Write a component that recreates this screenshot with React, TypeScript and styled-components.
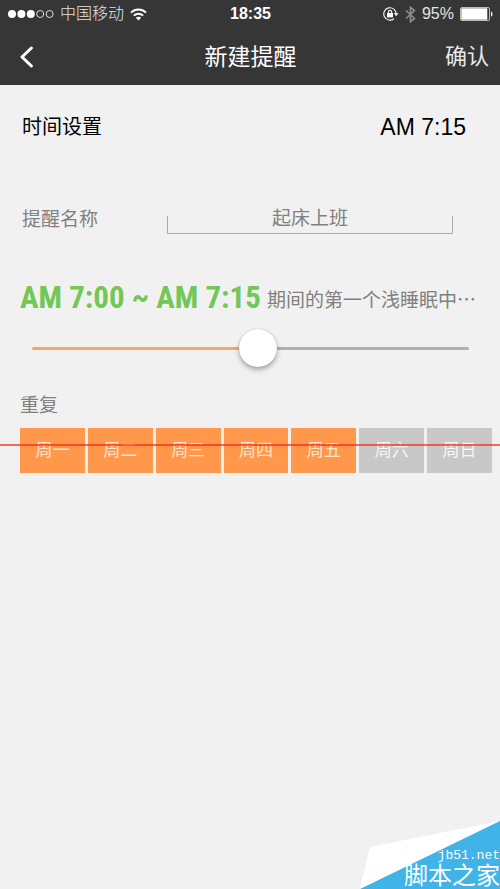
import React, { useState } from "react";
import styled, { createGlobalStyle } from "styled-components";

const GlobalStyle = createGlobalStyle`
  * { box-sizing: border-box; }
  body {
    margin: 0;
    background: #f1f1f1;
    font-family: "Liberation Sans", "Noto Sans CJK SC", sans-serif;
  }
  button, input { font: inherit; color: inherit; }
  button { border: 0; padding: 0; background: none; cursor: pointer; }
`;

const Screen = styled.div`
  position: relative;
  min-height: 100vh;
  overflow: hidden;
  display: flex;
  flex-direction: column;
`;

const TopBar = styled.header`
  background: #363636;
  color: #fff;
`;

const StatusBar = styled.div`
  display: grid;
  grid-template-columns: 1fr auto 1fr;
  align-items: center;
  height: 28px;
  padding: 0 7px 0 8px;
  font-size: 16px;
  line-height: 20px;
`;

const StatusGroup = styled.div<{ $end?: boolean }>`
  display: flex;
  align-items: center;
  justify-content: ${(p) => (p.$end ? "flex-end" : "flex-start")};
  gap: 6px;
  color: #e4e4e4;
`;

const Carrier = styled.span`
  font-weight: 300;
`;

const Clock = styled.span`
  font-weight: 700;
`;

const NavBar = styled.nav`
  display: grid;
  grid-template-columns: 1fr auto 1fr;
  align-items: center;
  height: 57px;
  padding: 0 11px 0 12px;
`;

const BackButton = styled.button`
  justify-self: start;
  display: flex;
  padding: 0 8px;
`;

const Title = styled.h1`
  margin: 0;
  font-size: 23px;
  line-height: 32px;
  font-weight: 400;
`;

const ConfirmButton = styled.button`
  justify-self: end;
  font-size: 22px;
  line-height: 32px;
  color: #e8e8e8;
`;

const Content = styled.main`
  display: flex;
  flex-direction: column;
  color: #808080;
  font-size: 19px;
  line-height: 28px;
`;

const TimeRow = styled.button`
  display: flex;
  justify-content: space-between;
  align-items: center;
  height: 84px;
  padding: 0 34px 0 22px;
  color: #000;
  font-size: 20px;
`;

const TimeValue = styled.span`
  font-size: 23px;
`;

const NameRow = styled.div`
  display: grid;
  grid-template-columns: 145px 1fr;
  align-items: end;
  margin-top: 31px;
  padding: 0 47px 0 22px;
`;

const NameInput = styled.input`
  width: 100%;
  height: 34px;
  padding: 0;
  border: 0;
  border-bottom: 1px solid #aaa;
  outline: 0;
  text-align: center;
  background:
    linear-gradient(#aaa, #aaa) left bottom / 1px 17px no-repeat,
    linear-gradient(#aaa, #aaa) right bottom / 1px 17px no-repeat;
`;

const Summary = styled.div`
  display: flex;
  align-items: center;
  gap: 6px;
  height: 40px;
  margin-top: 44px;
  padding: 0 20px;
  white-space: nowrap;
`;

const RangeText = styled.strong`
  color: #72c856;
  font-family: "Roboto Condensed", "Liberation Sans Narrow", sans-serif;
  font-size: 31px;
  line-height: 40px;
  font-weight: 700;
`;

const Note = styled.span`
  padding-top: 2px;
  font-family: "Noto Sans CJK SC", sans-serif;
`;

const Slider = styled.input`
  appearance: none;
  height: 38px;
  margin: 11px 31px 0 32px;
  background: transparent;
  cursor: pointer;

  &::-webkit-slider-runnable-track {
    height: 3px;
    border-radius: 2px;
    background: linear-gradient(
      to right,
      #faa566 var(--filled),
      #b0b0b0 var(--filled)
    );
  }

  &::-webkit-slider-thumb {
    appearance: none;
    width: 38px;
    height: 38px;
    margin-top: -18px;
    border-radius: 50%;
    background: #fff;
    box-shadow: 0 3px 5px rgba(0, 0, 0, 0.3), 0 0 1px rgba(0, 0, 0, 0.3);
  }
`;

const RepeatLabel = styled.h2`
  margin: 25px 20px 8px;
  font-size: 19px;
  line-height: 28px;
  font-weight: 400;
`;

const Days = styled.div`
  position: relative;
  display: grid;
  grid-template-columns: repeat(7, 1fr);
  gap: 3px;
  padding: 0 8px 0 20px;
`;

const Day = styled.button<{ $on: boolean }>`
  height: 45px;
  background: ${(p) => (p.$on ? "#ff984a" : "#c8c8c8")};
  color: ${(p) => (p.$on ? "#ffe4d0" : "#f6f6f6")};
  font-size: 17px;
  line-height: 24px;
`;

const RedLine = styled.div`
  position: absolute;
  left: 0;
  right: 0;
  top: 16px;
  height: 2px;
  background: rgba(250, 30, 20, 0.65);
  pointer-events: none;
`;

const Corner = styled.aside`
  position: absolute;
  right: 0;
  bottom: 0;
  width: 140px;
  height: 70px;
  display: flex;
  flex-direction: column;
  justify-content: flex-end;
  align-items: flex-end;
  color: #fff;
`;

const CornerArt = styled.svg`
  position: absolute;
  inset: 0;
`;

const SiteUrl = styled.span`
  position: relative;
  font-family: "Liberation Mono", monospace;
  font-size: 13px;
  line-height: 14px;
`;

const SiteName = styled.span`
  position: relative;
  font-size: 24px;
  line-height: 26px;
`;

function Signal() {
  return (
    <svg width="46" height="12" viewBox="0 0 46 12" aria-hidden="true">
      {[4, 13.4, 22.8].map((x) => (
        <circle key={x} cx={x} cy="6" r="4" fill="#fff" />
      ))}
      {[32.2, 41.6].map((x) => (
        <circle key={x} cx={x} cy="6" r="3.5" fill="none" stroke="#ddd" />
      ))}
    </svg>
  );
}

function Wifi() {
  return (
    <svg width="17" height="13" viewBox="0 0 17 13" fill="none" stroke="#fff" strokeWidth="2" aria-hidden="true">
      <path d="M1 4.6C5.2.4 11.8.4 16 4.6" />
      <path d="M3.8 7.6c2.7-2.6 6.7-2.6 9.4 0" />
      <path d="M8.5 12.4 5.8 9.7c1.5-1.3 3.9-1.3 5.4 0z" fill="#fff" stroke="none" />
    </svg>
  );
}

function RotationLock() {
  return (
    <svg width="16" height="14" viewBox="0 0 16 14" fill="none" stroke="#eee" aria-hidden="true">
      <path d="M13.2 7A6.2 6.2 0 1 0 11 11.7" strokeWidth="1.2" />
      <path d="M10.6 6.2h5l-2.5 3z" fill="#eee" stroke="none" />
      <rect x="4" y="6" width="6" height="4.4" fill="#fff" stroke="none" />
      <path d="M5.4 6V5a1.6 1.6 0 0 1 3.2 0v1" strokeWidth="1.2" />
    </svg>
  );
}

function Bluetooth() {
  return (
    <svg width="11" height="17" viewBox="0 0 11 17" fill="none" stroke="#8b8b8b" strokeWidth="1.7" aria-hidden="true">
      <path d="M1 4.5l8.5 8-4 3.2V1.3l4 3.2-8.5 8" />
    </svg>
  );
}

function Battery() {
  return (
    <svg width="33" height="14" viewBox="0 0 33 14" aria-hidden="true">
      <rect x=".5" y=".5" width="29" height="13" rx="1.5" fill="none" stroke="#bbb" />
      <rect x="1.3" y="1.3" width="26" height="11.4" fill="#fff" />
      <path d="M31 4.4c2 .6 2 4.6 0 5.2z" fill="#eee" />
    </svg>
  );
}

const dayNames = ["周一", "周二", "周三", "周四", "周五", "周六", "周日"];

export default function App() {
  const [name, setName] = useState("起床上班");
  const [position, setPosition] = useState(52);
  const [days, setDays] = useState([true, true, true, true, true, false, false]);

  const toggle = (index: number) =>
    setDays(days.map((on, i) => (i === index ? !on : on)));

  return (
    <>
      <GlobalStyle />
      <Screen lang="zh-CN">
        <TopBar>
          <StatusBar>
            <StatusGroup>
              <Signal />
              <Carrier>中国移动</Carrier>
              <Wifi />
            </StatusGroup>
            <Clock>18:35</Clock>
            <StatusGroup $end>
              <RotationLock />
              <Bluetooth />
              <span>95%</span>
              <Battery />
            </StatusGroup>
          </StatusBar>
          <NavBar>
            <BackButton aria-label="返回">
              <svg width="14" height="22" viewBox="0 0 14 22" fill="none" stroke="#fff" strokeWidth="3" strokeLinecap="round" strokeLinejoin="round">
                <path d="M11.4 2 2 11l9.4 9" />
              </svg>
            </BackButton>
            <Title>新建提醒</Title>
            <ConfirmButton>确认</ConfirmButton>
          </NavBar>
        </TopBar>

        <Content>
          <TimeRow>
            <span>时间设置</span>
            <TimeValue>AM 7:15</TimeValue>
          </TimeRow>
          <NameRow>
            <label htmlFor="reminder-name">提醒名称</label>
            <NameInput id="reminder-name" value={name} onChange={(e) => setName(e.target.value)} />
          </NameRow>
          <Summary>
            <RangeText>AM 7:00 ~ AM 7:15</RangeText>
            <Note>期间的第一个浅睡眠中⋯</Note>
          </Summary>
          <Slider
            type="range"
            min={0}
            max={100}
            aria-label="时间范围"
            value={position}
            onChange={(e) => setPosition(Number(e.target.value))}
            style={{ "--filled": `${position}%` } as React.CSSProperties}
          />
          <RepeatLabel>重复</RepeatLabel>
          <Days role="group" aria-label="重复">
            {dayNames.map((day, i) => (
              <Day key={day} $on={days[i]} aria-pressed={days[i]} onClick={() => toggle(i)}>
                {day}
              </Day>
            ))}
            <RedLine />
          </Days>
        </Content>

        <Corner>
          <CornerArt width="140" height="70" viewBox="0 0 140 70" aria-hidden="true">
            <path d="M0 70 10 28 140 2v68z" fill="#fff" />
            <path d="M0 70 140 2v68z" fill="#40b4e8" />
          </CornerArt>
          <SiteUrl>jb51.net</SiteUrl>
          <SiteName>脚本之家</SiteName>
        </Corner>
      </Screen>
    </>
  );
}
